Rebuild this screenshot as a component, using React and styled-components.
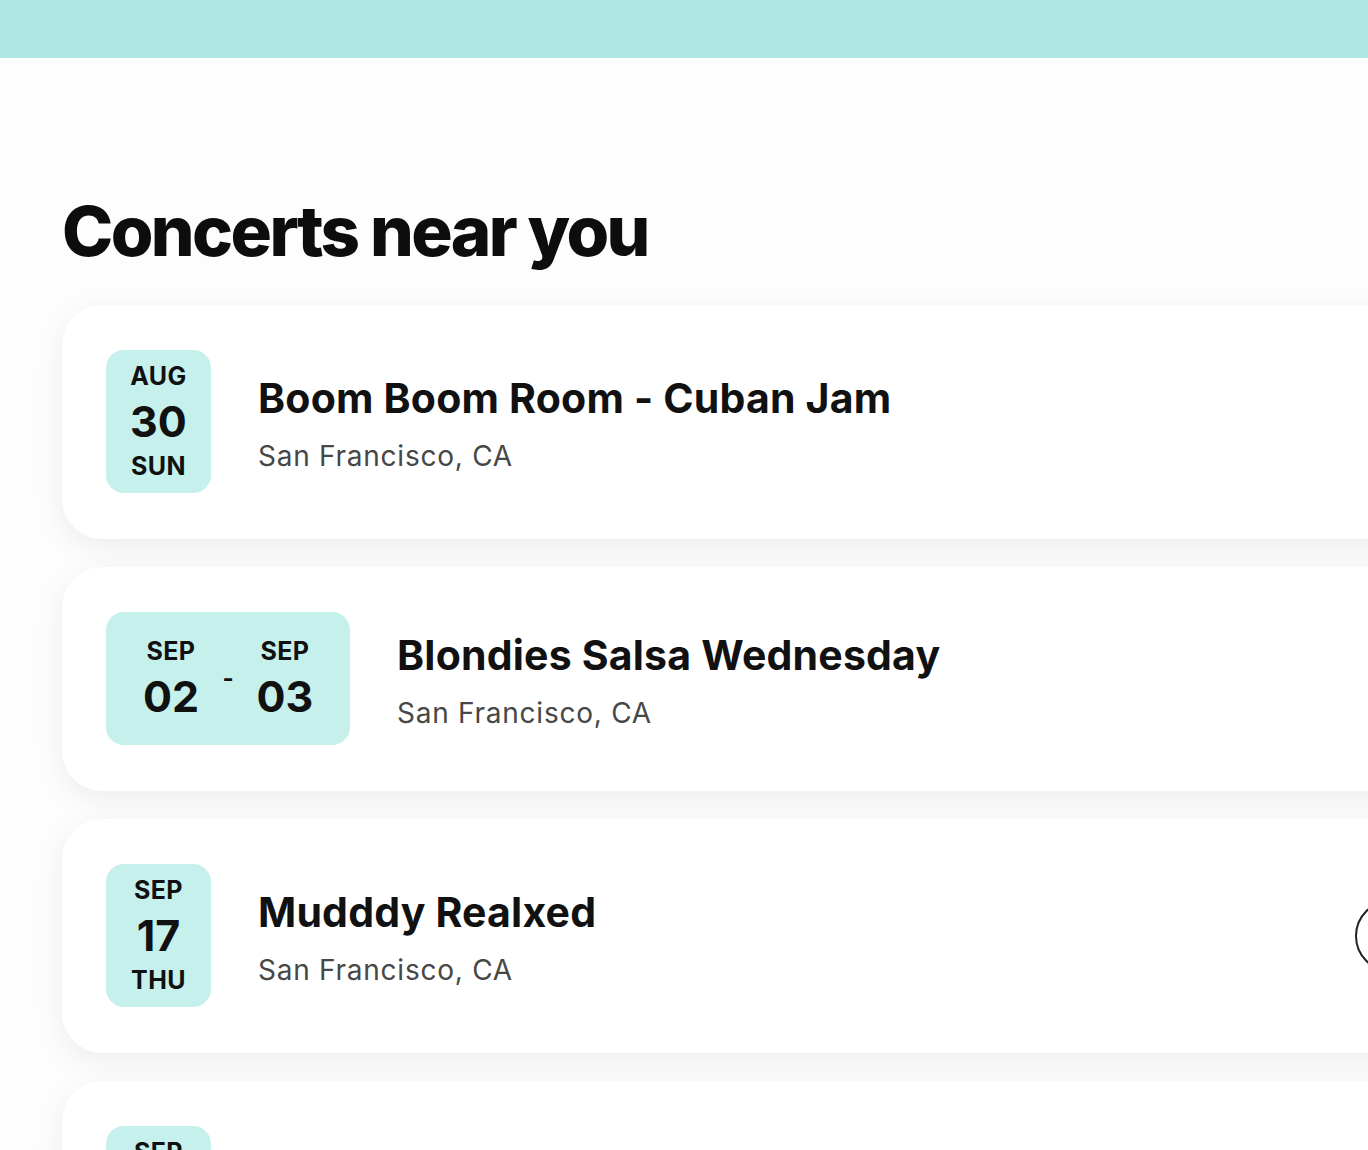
import React from "react";
import styled, { createGlobalStyle } from "styled-components";

const GlobalStyle = createGlobalStyle`
  html, body {
    margin: 0;
    padding: 0;
    background: #fdfdfd;
    overflow-x: hidden;
    font-family: Inter, "Noto Sans", sans-serif;
    color: #111;
  }
`;

const TopBar = styled.div`
  height: 58px;
  background: #aee6e3;
`;

const Main = styled.main`
  padding: 139px 0 0 62px;
`;

const Heading = styled.h1`
  margin: 0 0 39px 0;
  font-size: 69px;
  line-height: 1;
  font-weight: 800;
  letter-spacing: -2.6px;
  color: #0d0d0d;
`;

const List = styled.div`
  display: flex;
  flex-direction: column;
  gap: 28px;
  width: 1440px;
`;

const Card = styled.div`
  display: flex;
  align-items: center;
  gap: 47px;
  padding: 45px 75px 46px 44px;
  background: #fff;
  border-radius: 40px;
  box-shadow: 0 8px 30px rgba(0, 0, 0, 0.065);
`;

const DateBox = styled.div`
  display: flex;
  align-items: center;
  justify-content: center;
  background: #c6f0ec;
  border-radius: 18px;
  width: ${(p) => (p.$range ? "244px" : "105px")};
  padding: ${(p) => (p.$range ? "24px 0 19px" : "11px 0 12px")};
  box-sizing: border-box;
  flex-shrink: 0;
`;

const DateCol = styled.div`
  display: flex;
  flex-direction: column;
  align-items: center;
  width: 60px;
`;

const Small = styled.span`
  font-size: 25px;
  font-weight: 700;
  line-height: 30px;
  letter-spacing: 0.4px;
`;

const Big = styled.span`
  font-size: 43px;
  font-weight: 700;
  line-height: 60px;
`;

const Dash = styled.span`
  width: 54px;
  text-align: center;
  font-size: 24px;
  font-weight: 700;
  margin-top: -6px;
`;

const Info = styled.div`
  display: flex;
  flex-direction: column;
  gap: 15px;
  padding-top: 6px;
  flex: 1;
`;

const Title = styled.h2`
  margin: 0;
  font-size: 41px;
  font-weight: 700;
  letter-spacing: 0.2px;
  line-height: 1.2;
`;

const Place = styled.p`
  margin: 0;
  font-size: 28px;
  letter-spacing: 0.75px;
  color: #474747;
  line-height: 1.3;
`;

const CircleButton = styled.button`
  width: 72px;
  height: 72px;
  border-radius: 50%;
  border: 2px solid #222;
  background: #fff;
  flex-shrink: 0;
  padding: 0;
`;

const events = [
  { month: "AUG", day: "30", weekday: "SUN", title: "Boom Boom Room - Cuban Jam" },
  {
    range: [
      { month: "SEP", day: "02" },
      { month: "SEP", day: "03" },
    ],
    title: "Blondies Salsa Wednesday",
  },
  { month: "SEP", day: "17", weekday: "THU", title: "Mudddy Realxed", action: true },
  { month: "SEP", day: "18", weekday: "FRI", title: "Bissap Baobab Salsa Night" },
];

export default function App() {
  return (
    <>
      <GlobalStyle />
      <TopBar />
      <Main>
        <Heading>Concerts near you</Heading>
        <List>
          {events.map((e) => (
            <Card key={e.title}>
              {e.range ? (
                <DateBox $range>
                  <DateCol>
                    <Small>{e.range[0].month}</Small>
                    <Big>{e.range[0].day}</Big>
                  </DateCol>
                  <Dash>-</Dash>
                  <DateCol>
                    <Small>{e.range[1].month}</Small>
                    <Big>{e.range[1].day}</Big>
                  </DateCol>
                </DateBox>
              ) : (
                <DateBox>
                  <DateCol>
                    <Small>{e.month}</Small>
                    <Big>{e.day}</Big>
                    <Small>{e.weekday}</Small>
                  </DateCol>
                </DateBox>
              )}
              <Info>
                <Title>{e.title}</Title>
                <Place>San Francisco, CA</Place>
              </Info>
              {e.action && <CircleButton aria-label="more" />}
            </Card>
          ))}
        </List>
      </Main>
    </>
  );
}
